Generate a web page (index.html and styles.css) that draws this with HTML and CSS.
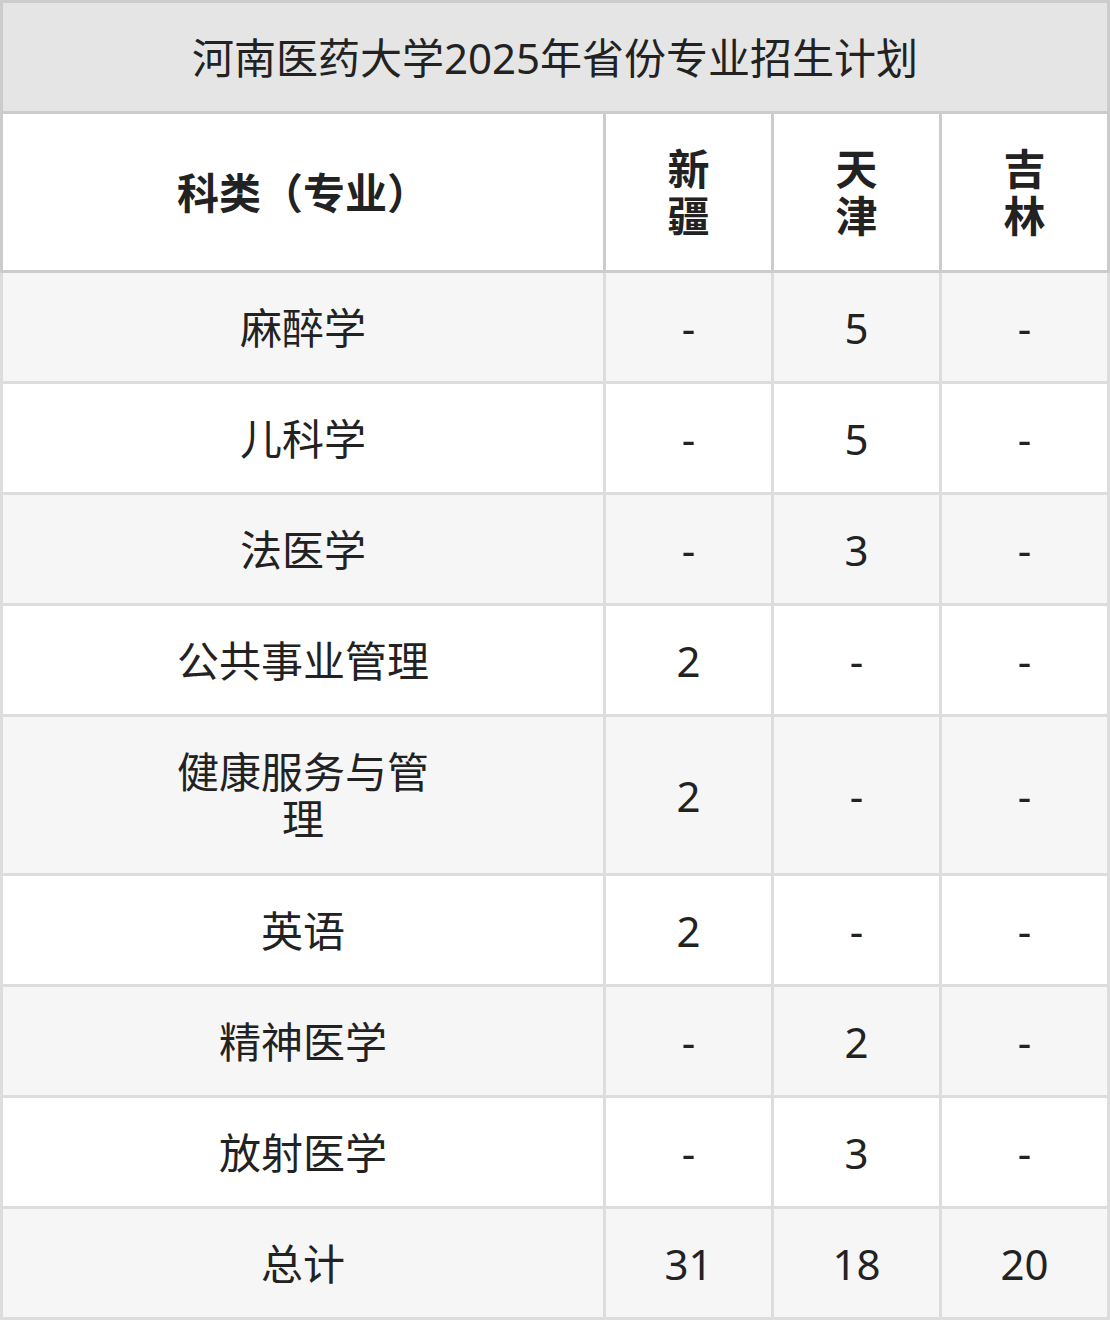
FILE: index.html
```html
<!DOCTYPE html>
<html lang="zh">
<head>
<meta charset="utf-8">
<link rel="stylesheet" href="styles.css">
</head>
<body>
<div class="table">
  <div class="head">
    <div class="title">河南医药大学2025年省份专业招生计划</div>
    <div class="row hrow">
      <div class="cell c1"><span class="wrap">科类（专业）</span></div>
      <div class="cell cn"><span class="wrapn">新疆</span></div>
      <div class="cell cn"><span class="wrapn">天津</span></div>
      <div class="cell cn"><span class="wrapn">吉林</span></div>
    </div>
  </div>
  <div class="body">
    <div class="row odd"><div class="cell c1"><span class="wrap">麻醉学</span></div><div class="cell">-</div><div class="cell">5</div><div class="cell">-</div></div>
    <div class="row"><div class="cell c1"><span class="wrap">儿科学</span></div><div class="cell">-</div><div class="cell">5</div><div class="cell">-</div></div>
    <div class="row odd"><div class="cell c1"><span class="wrap">法医学</span></div><div class="cell">-</div><div class="cell">3</div><div class="cell">-</div></div>
    <div class="row"><div class="cell c1"><span class="wrap">公共事业管理</span></div><div class="cell">2</div><div class="cell">-</div><div class="cell">-</div></div>
    <div class="row odd tall"><div class="cell c1"><span class="wrap">健康服务与管理</span></div><div class="cell">2</div><div class="cell">-</div><div class="cell">-</div></div>
    <div class="row"><div class="cell c1"><span class="wrap">英语</span></div><div class="cell">2</div><div class="cell">-</div><div class="cell">-</div></div>
    <div class="row odd"><div class="cell c1"><span class="wrap">精神医学</span></div><div class="cell">-</div><div class="cell">2</div><div class="cell">-</div></div>
    <div class="row"><div class="cell c1"><span class="wrap">放射医学</span></div><div class="cell">-</div><div class="cell">3</div><div class="cell">-</div></div>
    <div class="row odd"><div class="cell c1"><span class="wrap">总计</span></div><div class="cell">31</div><div class="cell">18</div><div class="cell">20</div></div>
  </div>
</div>
</body>
</html>
```
FILE: styles.css
```css
html, body {
  margin: 0;
  padding: 0;
  background: #ffffff;
}
.table {
  width: 1110px;
  font-family: "Noto Sans", "Noto Sans CJK SC", sans-serif;
  font-size: 42px;
  line-height: 47px;
  color: #222222;
}
.head {
  background: #cccccc;
  padding: 3px 3px 3px 3px;
  display: flex;
  flex-direction: column;
  gap: 3px;
}
.title {
  height: 108px;
  background: #e5e5e5;
  display: flex;
  align-items: center;
  justify-content: center;
}
.body {
  background: #dddddd;
  padding: 0 3px 3px 3px;
  display: flex;
  flex-direction: column;
  gap: 3px;
}
.row {
  display: grid;
  grid-template-columns: 600px 165px 165px 165px;
  gap: 3px;
  height: 108px;
}
.row.tall, .row.hrow {
  height: 156px;
}
.cell {
  background: #ffffff;
  display: flex;
  align-items: center;
  justify-content: center;
  text-align: center;
}
.row.odd .cell {
  background: #f6f6f6;
}
.hrow .cell {
  font-weight: bold;
}
.wrap {
  max-width: 285px;
}
.wrapn {
  max-width: 60px;
}
```
